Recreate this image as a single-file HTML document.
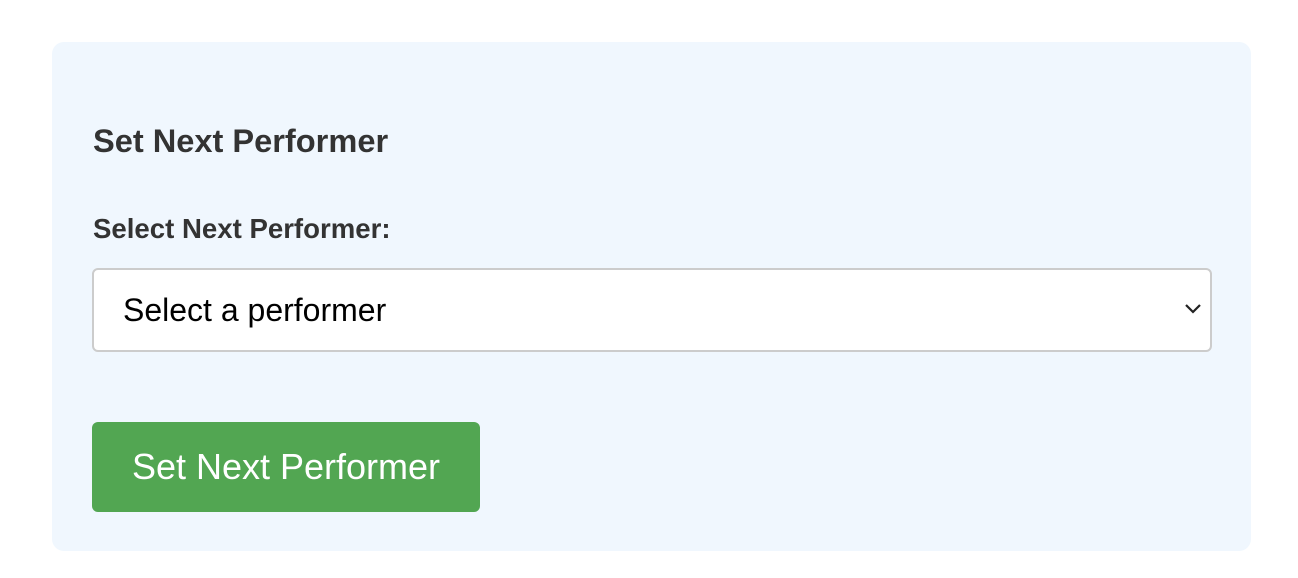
<!DOCTYPE html>
<html><head><meta charset="utf-8"><style>
html,body{margin:0;padding:0;background:#fff;width:1298px;height:578px;overflow:hidden;font-family:"Liberation Sans",Arial,sans-serif;}
.panel{position:absolute;left:52px;top:42px;width:1199px;height:509px;background:#f0f7fe;border-radius:12px;}
h2{position:absolute;left:93px;top:122px;margin:0;font-size:32.6px;font-weight:bold;color:#333;}
.lbl{position:absolute;left:93px;top:213px;font-size:27.6px;font-weight:bold;color:#333;}
.sel{position:absolute;left:92px;top:268px;width:1116px;height:80px;background:#fff;border:2px solid #ccc;border-radius:6px;}
.sel span{position:absolute;left:29px;top:22px;font-size:32px;color:#000;}
.sel svg{position:absolute;right:8px;top:32px;}
.btn{position:absolute;left:92px;top:422px;width:388px;height:90px;background:#52a652;border-radius:6px;color:#fff;font-size:36px;line-height:90px;text-align:center;}
</style></head><body>
<div class="panel"></div>
<h2>Set Next Performer</h2>
<div class="lbl">Select Next Performer:</div>
<div class="sel"><span>Select a performer</span>
<svg width="18" height="14" viewBox="0 0 18 14"><path d="M2 3 L9 10 L16 3" fill="none" stroke="#222" stroke-width="2.2"/></svg></div>
<div class="btn">Set Next Performer</div>
</body></html>
